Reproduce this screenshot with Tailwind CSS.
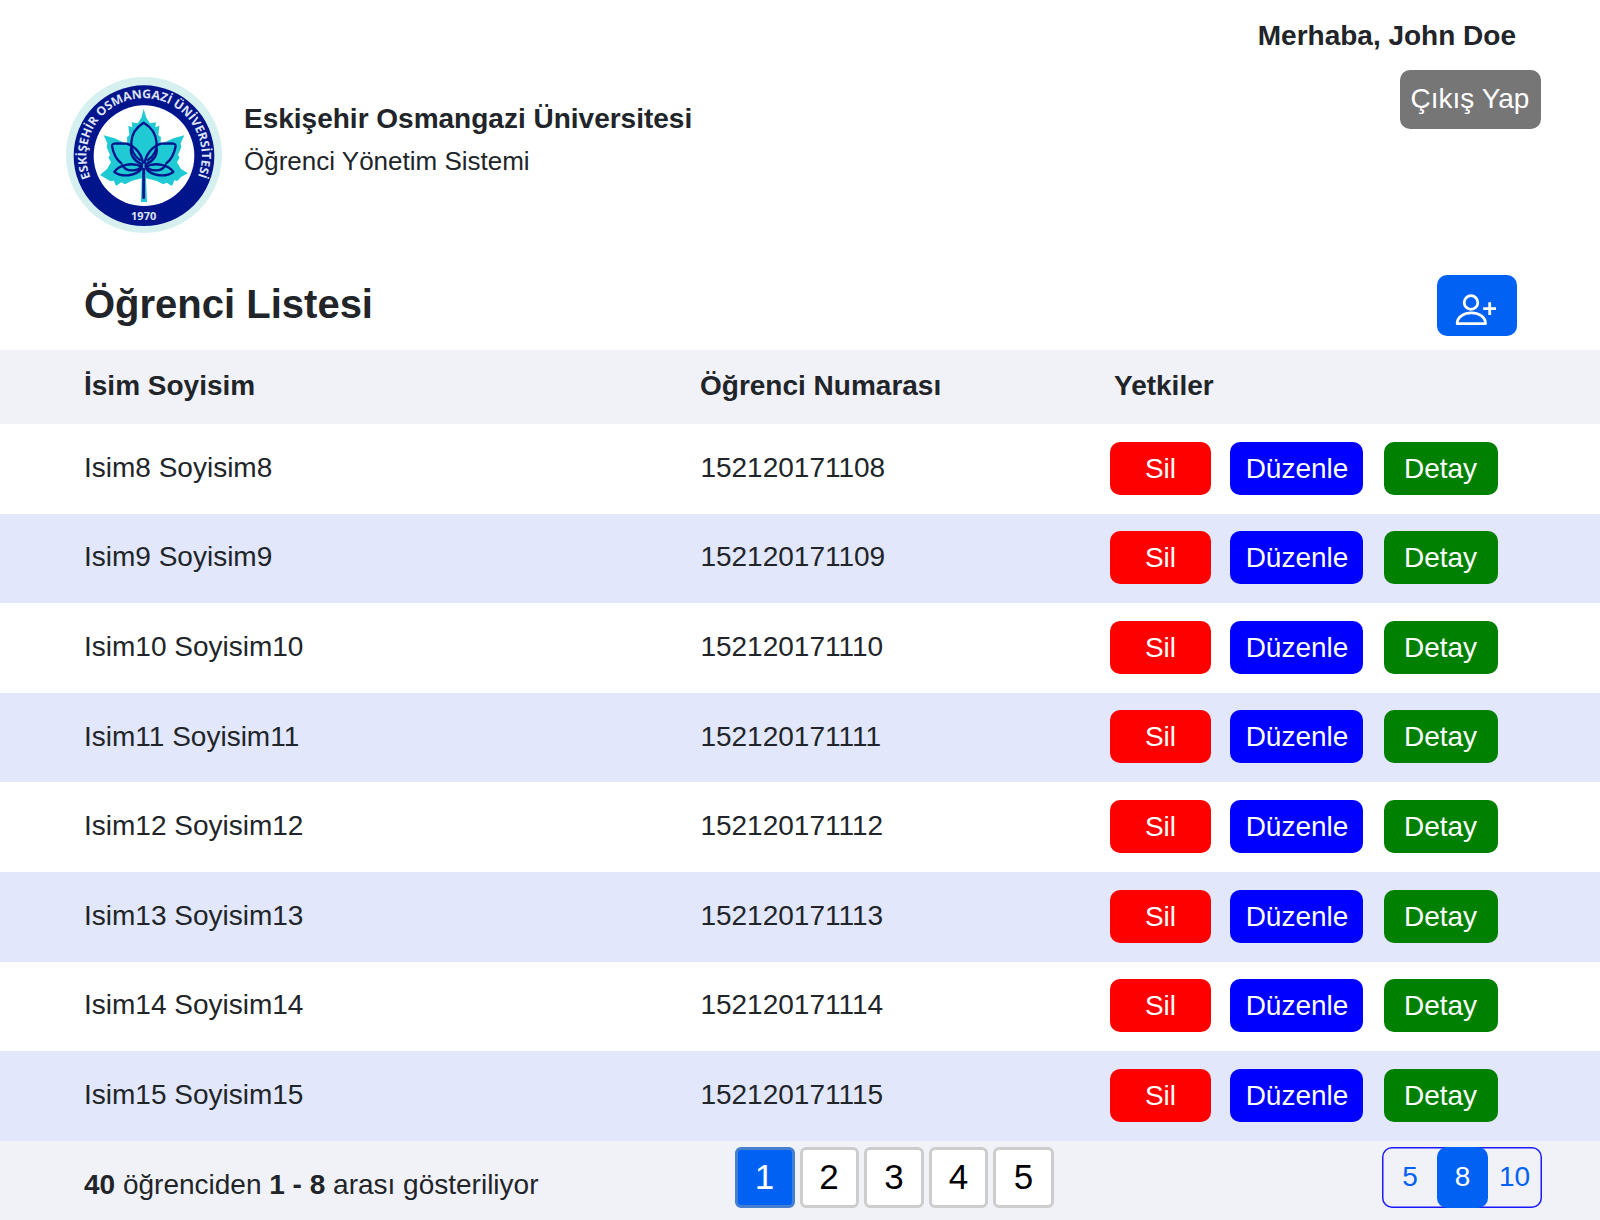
<!DOCTYPE html>
<html lang="tr">
<head>
<meta charset="utf-8">
<title>Öğrenci Listesi</title>
<script src="https://cdn.jsdelivr.net/npm/@tailwindcss/browser@4"></script>
</head>
<body class="bg-white">
<div class="w-[1600px] h-[1220px] overflow-hidden flex flex-col bg-white text-[#212529] text-[28px] leading-[42px] font-['Liberation_Sans',Arial,sans-serif]">
  <header class="h-[254px] shrink-0 flex justify-between">
    <div class="flex pt-[77px] pl-[66px]">
      <svg class="w-[156px] h-[156px] shrink-0" viewBox="48 51 468 468">
        <defs>
          <path id="ring" d="M122 353 A173 173 0 1 1 432 374"/>
          <g id="half">
            <path d="M214 310 C198 298 190 280 186 258 C186 250 192 250 200 250 L230 251 C258 260 276 285 279 308"/>
            <path d="M244 260 C238 285 254 304 276 313"/>
            <path d="M276 320 C245 305 207 315 193 336 C215 352 258 350 276 324"/>
            <path d="M217 316 C228 336 262 336 276 318"/>
          </g>
        </defs>
        <circle cx="282" cy="285" r="234" fill="#d6f0f0"/>
        <circle cx="282" cy="287" r="211" fill="#00148c"/>
        <circle cx="282" cy="287" r="151" fill="#fff"/>
        <path fill="#1fcad4" d="M281 147 L289 173 L300 190 L318 187 L316 202 L328 197 L325 225 L333 232 L331 252 L352 243 L370 235 L403 226 L392 250 L394 262 L384 284 L389 293 L381 307 L393 327 L414 340 L394 350 L382 363 L373 361 L366 378 L350 368 L340 373 L318 362 L288 355 L291 426 L273 426 L275 355 L246 362 L225 373 L214 367 L198 378 L192 362 L180 363 L150 345 L171 327 L183 307 L175 293 L180 284 L170 262 L172 250 L161 226 L194 235 L212 243 L232 252 L231 232 L238 225 L235 197 L247 202 L245 187 L263 190 L274 173 Z"/>
        <g fill="none" stroke="#00148c" stroke-width="7" stroke-linecap="round" stroke-linejoin="round">
          <path d="M270 300 C235 278 232 218 281 188 C331 218 330 278 293 300"/>
          <use href="#half"/>
          <use href="#half" transform="matrix(-1 0 0 1 563 0)"/>
          <path d="M281 328 V413" stroke-width="8.5"/>
        </g>
        <text class="font-['Open_Sans',sans-serif] font-bold" font-size="36" fill="#dfe2f3"><textPath href="#ring" textLength="674" lengthAdjust="spacingAndGlyphs">ESKİŞEHİR OSMANGAZİ ÜNİVERSİTESİ</textPath></text>
        <text class="font-['Open_Sans',sans-serif] font-bold" x="281" y="481" text-anchor="middle" font-size="33" fill="#dfe2f3">1970</text>
      </svg>
      <div class="pt-[21px] pl-[22px]">
        <div class="font-bold">Eskişehir Osmangazi Üniversitesi</div>
        <div class="text-[26px]">Öğrenci Yönetim Sistemi</div>
      </div>
    </div>
    <div class="flex flex-col items-end pt-[15px] pr-[59px]">
      <div class="font-bold pr-[25px]">Merhaba, John Doe</div>
      <button class="mt-[13.400px] w-[141px] h-[59px] pb-px pr-px rounded-[10px] bg-[#767676] text-white whitespace-nowrap">Çıkış Yap</button>
    </div>
  </header>

  <div class="h-[96px] shrink-0 flex justify-between pl-[84px] pr-[83px]">
    <h1 class="text-[40px] leading-[60px] font-bold pt-[20px]">Öğrenci Listesi</h1>
    <button class="mt-[21px] w-[80px] h-[61px] rounded-[10px] bg-[#0061f2] flex items-center justify-center">
      <svg class="w-[42px] h-[32px] mt-[8px] mr-[2px]" viewBox="0 0 42 32" fill="none" stroke="#fff" stroke-width="2.800">
        <circle cx="16" cy="8.500" r="6.800"/>
        <path d="M2.200 29.700 C2.200 15.300 30.500 15.300 30.500 29.700 Z" stroke-linejoin="round"/>
        <path d="M34.700 8.200 V21 M28.200 14.700 H41"/>
      </svg>
    </button>
  </div>

  <div class="h-[74px] shrink-0 pb-[3px] bg-[#f1f2f8] grid grid-cols-[616px_401px_1fr] items-center font-bold pl-[84px]">
    <div>İsim Soyisim</div><div>Öğrenci Numarası</div><div class="pl-[13px]">Yetkiler</div>
  </div>
  <div id="rows" class="shrink-0"></div>

  <footer class="grow bg-[#f1f2f8] flex items-start pl-[84px]">
    <div class="w-[651px] pt-[23px]"><b>40</b> öğrenciden <b>1 - 8</b> arası gösteriliyor</div>
    <div class="flex gap-[5px] pt-[6px] text-[35px] leading-[54px] text-black">
      <button class="w-[60px] h-[61px] pr-px rounded-[6px] border-3 border-[#477fd0] bg-[#0061f2] text-white">1</button>
      <button class="w-[59px] h-[61px] pr-px rounded-[6px] border-3 border-[#cdcdcd] bg-white">2</button>
      <button class="w-[60px] h-[61px] rounded-[6px] border-3 border-[#cdcdcd] bg-white">3</button>
      <button class="w-[59px] h-[61px] rounded-[6px] border-3 border-[#cdcdcd] bg-white">4</button>
      <button class="w-[61px] h-[61px] rounded-[6px] border-3 border-[#cdcdcd] bg-white">5</button>
    </div>
    <div class="ml-[328px] mt-[6px] w-[160px] h-[61px] flex rounded-[10px] inset-ring-[1.5px] inset-ring-[#1a1aff] text-[#0061f2] text-center leading-[59px]">
      <div class="w-[55px] pl-px">5</div>
      <div class="w-[51px] rounded-[10px] bg-[#0061f2] text-white">8</div>
      <div class="w-[54px] pr-px">10</div>
    </div>
  </footer>
</div>
<script>
  document.getElementById('rows').innerHTML = [8, 9, 10, 11, 12, 13, 14, 15].map(n => `
    <div class="h-[89.6px] grid grid-cols-[616px_401px_1fr] items-center pl-[84px] even:bg-[#e2e7fb]">
      <div class="pb-[2px]">Isim${n} Soyisim${n}</div>
      <div class="pb-[2px] pl-[0.4px]">1521201711${String(n).padStart(2, '0')}</div>
      <div class="flex pl-[9px] pb-[1.500px] text-white leading-[53px]">
        <button class="w-[101px] h-[53px] rounded-[10px] bg-[#ff0000]">Sil</button>
        <button class="ml-[19px] w-[133px] h-[53px] pl-px rounded-[10px] bg-[#0000ff]">Düzenle</button>
        <button class="ml-[21px] w-[114px] h-[53px] pr-px rounded-[10px] bg-[#008000]">Detay</button>
      </div>
    </div>`).join('');
</script>
</body>
</html>
